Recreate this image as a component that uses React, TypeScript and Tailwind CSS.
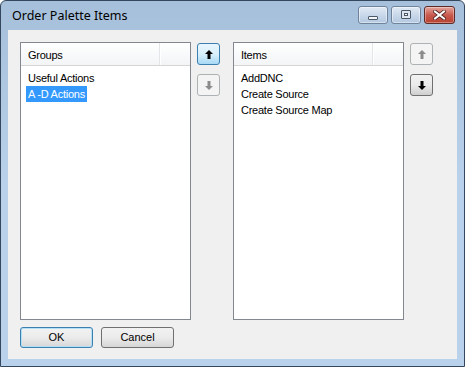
import React from 'react';

type ArrowProps = { dir: 'up' | 'down'; color: string };

const Arrow = ({ dir, color }: ArrowProps) => (
  <svg width="8" height="9" viewBox="0 0 8 9" className={dir === 'down' ? 'rotate-180' : ''}>
    <polygon points="4,0 8,4 5.5,4 5.5,9 2.5,9 2.5,4 0,4" fill={color} />
  </svg>
);

type MoveButtonProps = { dir: 'up' | 'down'; state: 'hot' | 'normal' | 'disabled'; className?: string };

const MoveButton = ({ dir, state, className = '' }: MoveButtonProps) => {
  const look =
    state === 'hot'
      ? 'border-[#3c7fb1] bg-gradient-to-b from-[#eaf6fd] via-[#d9f0fc] to-[#a7d9f5]'
      : state === 'normal'
        ? 'border-[#707070] bg-gradient-to-b from-[#f2f2f2] via-[#ebebeb] to-[#cfcfcf]'
        : 'border-[#adb2b5] bg-[#f4f4f4]';
  return (
    <div className={`w-[23px] h-[22px] rounded-[3px] border flex items-center justify-center ${look} ${className}`}>
      <Arrow dir={dir} color={state === 'disabled' ? '#8c8c8c' : '#000000'} />
    </div>
  );
};

type ListProps = { title: string; rows: string[]; selected?: number };

const ListBox = ({ title, rows, selected }: ListProps) => (
  <div className="w-[171px] h-[278px] border border-[#828790] bg-white flex flex-col">
    <div className="h-[23px] flex border-b border-[#d5d5d5] bg-gradient-to-b from-white to-[#f3f4f6]">
      <div className="w-[139px] flex items-center pl-[7px] pt-[2px] border-r border-[#e3e5e8]">{title}</div>
      <div className="w-px bg-white" />
      <div className="flex-1" />
    </div>
    <div className="pt-[4px] flex flex-col">
      {rows.map((r, i) => (
        <div key={r} className="h-[16px] pl-[5px] flex">
          <span className={`px-[2px] leading-[16px] ${i === selected ? 'bg-[#3399ff] text-white' : ''}`}>{r}</span>
        </div>
      ))}
    </div>
  </div>
);

const CaptionButton = ({ kind }: { kind: 'min' | 'max' | 'close' }) => {
  if (kind === 'close') {
    return (
      <div className="w-[31px] h-[18px] rounded-[3px] border border-[#5d2a27] bg-gradient-to-b from-[#e3a59d] via-[#c95a4f] to-[#b8412f] flex items-center justify-center shadow-[inset_0_0_0_1px_rgba(255,255,255,0.35)]">
        <svg width="13" height="10" viewBox="0 0 13 10">
          <path d="M2 1.5 L11 8.5 M11 1.5 L2 8.5" stroke="#4a2320" strokeWidth="3.6" strokeLinecap="square" />
          <path d="M2 1.5 L11 8.5 M11 1.5 L2 8.5" stroke="#ffffff" strokeWidth="2" strokeLinecap="square" />
        </svg>
      </div>
    );
  }
  return (
    <div className="w-[30px] h-[18px] rounded-[3px] border border-[#6f839d] bg-gradient-to-b from-[#e1eaf4] via-[#c9d8ea] to-[#b3c8e0] flex items-center justify-center shadow-[inset_0_0_0_1px_rgba(255,255,255,0.45)]">
      {kind === 'min' ? (
        <div className="w-[10px] h-[4px] mt-[6px] border border-[#4a5766] bg-[#f4f7fb] rounded-[1px]" />
      ) : (
        <div className="w-[10px] h-[9px] border border-[#4a5766] rounded-[1px] bg-[#dde6f0] flex items-center justify-center">
          <div className="w-[4px] h-[3px] border border-[#4a5766] bg-white" />
        </div>
      )}
    </div>
  );
};

const PushButton = ({ label, isDefault }: { label: string; isDefault?: boolean }) => (
  <div
    className={`w-[73px] h-[21px] rounded-[3px] border flex items-center justify-center bg-gradient-to-b from-[#f2f2f2] via-[#ebebeb] to-[#d6d6d6] ${
      isDefault ? 'border-[#3c7fb1] shadow-[inset_0_0_0_1px_#b4e0f7]' : 'border-[#707070]'
    }`}
  >
    {label}
  </div>
);

export default function App() {
  return (
    <div className="w-[465px] h-[367px] bg-white">
      <div className="w-[465px] h-[367px] rounded-t-[6px] border border-[#34475c] bg-gradient-to-b from-[#a6bfda] via-[#b9d1ea] to-[#b9d1ea] flex flex-col">
        <div className="h-[29px] flex items-center pl-[11px] pr-[9px]">
          <div className="flex-1 text-[12.5px] text-black font-['Noto_Sans',sans-serif] pt-[1px]">Order Palette Items</div>
          <div className="flex items-center gap-[3px] -mt-[2px]">
            <CaptionButton kind="min" />
            <CaptionButton kind="max" />
            <CaptionButton kind="close" />
          </div>
        </div>
        <div className="flex-1 mx-[7px] mb-[7px] bg-[#f0f0f0] pt-[12px] pl-[12px] flex flex-col text-[11px] tracking-[-0.25px] text-black font-['Liberation_Sans',Arial,sans-serif]">
          <div className="flex">
            <ListBox title="Groups" rows={['Useful Actions', 'A -D Actions']} selected={1} />
            <div className="ml-[6px] flex flex-col">
              <MoveButton dir="up" state="hot" className="mt-px" />
              <MoveButton dir="down" state="disabled" className="mt-[9px]" />
            </div>
            <div className="ml-[13px]">
              <ListBox title="Items" rows={['AddDNC', 'Create Source', 'Create Source Map']} />
            </div>
            <div className="ml-[6px] flex flex-col">
              <MoveButton dir="up" state="disabled" className="mt-px" />
              <MoveButton dir="down" state="normal" className="mt-[9px]" />
            </div>
          </div>
          <div className="mt-[7px] flex gap-[8px] tracking-normal">
            <PushButton label="OK" isDefault />
            <PushButton label="Cancel" />
          </div>
        </div>
      </div>
    </div>
  );
}
